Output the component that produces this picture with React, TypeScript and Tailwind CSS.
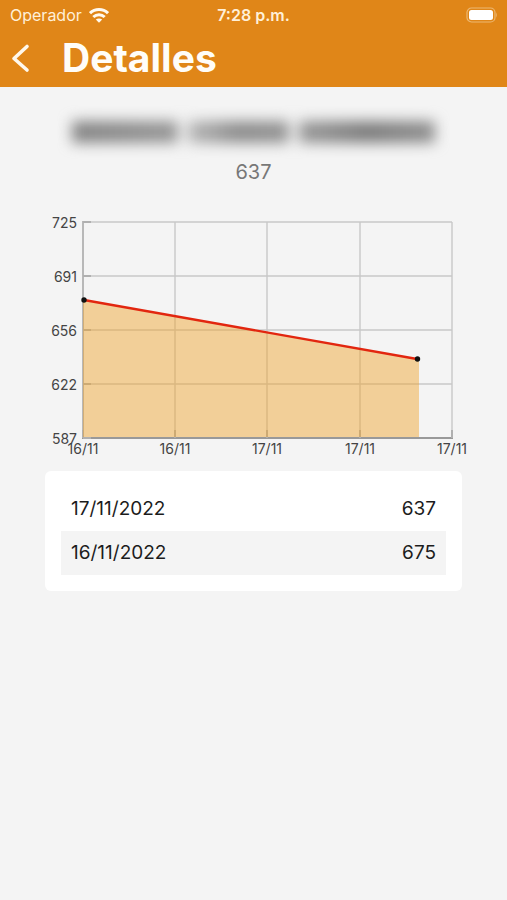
const yTicks = [
  { label: '725', y: 12 },
  { label: '691', y: 66 },
  { label: '656', y: 120 },
  { label: '622', y: 174 },
  { label: '587', y: 228 },
];

const xTicks = [
  { label: '16/11', x: 83 },
  { label: '16/11', x: 175 },
  { label: '17/11', x: 267 },
  { label: '17/11', x: 360 },
  { label: '17/11', x: 452 },
];

const records = [
  { date: '17/11/2022', value: 637 },
  { date: '16/11/2022', value: 675 },
];

function StatusBar() {
  return (
    <div className="grid h-[30px] grid-cols-3 items-center px-[10px] text-[16px] text-[#fff0d8]">
      <div className="flex items-center gap-[7px]">
        <span>Operador</span>
        <svg width="20" height="15" viewBox="0 0 20 15" fill="none" stroke="#fffaf0" strokeWidth="3" aria-label="Wi-Fi">
          <path d="M1 5.200C6 .4 14 .4 19 5.200" />
          <path d="M4.300 9C7.600 5.900 12.400 5.900 15.700 9" />
          <path d="M10 14.800L6.800 11.600C8.700 10 11.300 10 13.200 11.600Z" fill="#fffaf0" stroke="none" />
        </svg>
      </div>
      <span className="text-center font-semibold whitespace-nowrap">7:28 p.m.</span>
      <svg className="justify-self-end" width="31" height="16" viewBox="0 0 31 16" aria-label="Batería">
        <rect x="1" y="1" width="28" height="14" rx="4.5" fill="none" stroke="#ecb872" strokeWidth="1.2" />
        <rect x="3" y="3" width="24" height="10" rx="2.5" fill="#fff" />
        <path d="M30 5.5Q31.500 8 30 10.500Z" fill="#ecb872" />
      </svg>
    </div>
  );
}

function WeightChart() {
  return (
    <svg className="block w-full" viewBox="0 0 507 251" role="img" aria-label="Historial">
      <g stroke="#c8c8c8" strokeWidth="1.4">
        {yTicks.map((t) => (
          <line key={t.label} x1="83" x2="452" y1={t.y} y2={t.y} />
        ))}
        {xTicks.map((t) => (
          <line key={t.x} x1={t.x} x2={t.x} y1="12" y2="228" />
        ))}
      </g>
      <g stroke="#b0b0b0" strokeWidth="2">
        <line x1="83" x2="83" y1="11" y2="229" stroke="#b8b8b8" />
        <line x1="82" x2="453" y1="228" y2="228" stroke="#999" />
        {yTicks.map((t) => (
          <line key={t.label} x1="83" x2="91" y1={t.y} y2={t.y} />
        ))}
        {xTicks.map((t) => (
          <line key={t.x} x1={t.x} x2={t.x} y1="220" y2="228" />
        ))}
      </g>
      <path d="M83 90L419 149.500V227H83Z" fill="#f0a42c" fillOpacity=".46" />
      <line x1="84" y1="90" x2="417" y2="149" stroke="#e2260f" strokeWidth="2.3" />
      <circle cx="84" cy="90" r="2.7" fill="#111" />
      <circle cx="417.500" cy="149" r="2.700" fill="#111" />
      <g fill="#444" fontSize="14">
        {yTicks.map((t) => (
          <text key={t.label} x="77" y={t.y + 6} textAnchor="end">
            {t.label}
          </text>
        ))}
        {xTicks.map((t) => (
          <text key={t.x} x={t.x} y="244" textAnchor="middle">
            {t.label}
          </text>
        ))}
      </g>
    </svg>
  );
}

export default function App() {
  return (
    <div className="min-h-screen bg-[#f4f4f4] font-['Inter','Liberation_Sans',sans-serif]">
      <header className="bg-[#e08618]">
        <StatusBar />
        <div className="flex h-[57px] items-center gap-[31px] pb-[2px] pl-[11px]">
          <button type="button" aria-label="Volver" className="flex h-[30px] w-5 items-center justify-center">
            <svg width="20" height="30" viewBox="0 0 20 30" fill="none" stroke="#fff8ec" strokeWidth="3.6" strokeLinecap="round" strokeLinejoin="round">
              <path d="M16 3.500L3 15.500L16 27" />
            </svg>
          </button>
          <h1 className="text-[39px] leading-[54px] font-bold text-[#fffdf8]">Detalles</h1>
        </div>
      </header>

      <main>
        <div className="flex h-[90px] items-center justify-center gap-[10px] px-[72px] blur-[7px]" aria-hidden="true">
          <div className="h-[22px] flex-[108] bg-linear-to-r from-[#858585] via-[#8d8d8d] to-[#979797]" />
          <div className="h-[22px] flex-[104] bg-linear-to-r from-[#b8b8b8] via-[#8c8c8c] to-[#949494]" />
          <div className="h-[22px] flex-[139] bg-linear-to-r from-[#999] via-[#7c7c7c] to-[#909090]" />
        </div>
        <p className="-mt-[19px] text-center text-[20px] leading-7 text-[#777]">637</p>

        <div className="mt-[24px]">
          <WeightChart />
        </div>

        <section className="mx-[45px] mt-[10px] rounded-md bg-white p-4">
          <table className="w-full text-[19px] leading-6 text-[#1c1c1c]">
            <tbody>
              {records.map((r) => (
                <tr key={r.date} className="h-[44px] even:bg-[#f4f4f4]">
                  <td className="pl-[10px]">{r.date}</td>
                  <td className="pr-[10px] text-right">{r.value}</td>
                </tr>
              ))}
            </tbody>
          </table>
        </section>
      </main>
    </div>
  );
}
